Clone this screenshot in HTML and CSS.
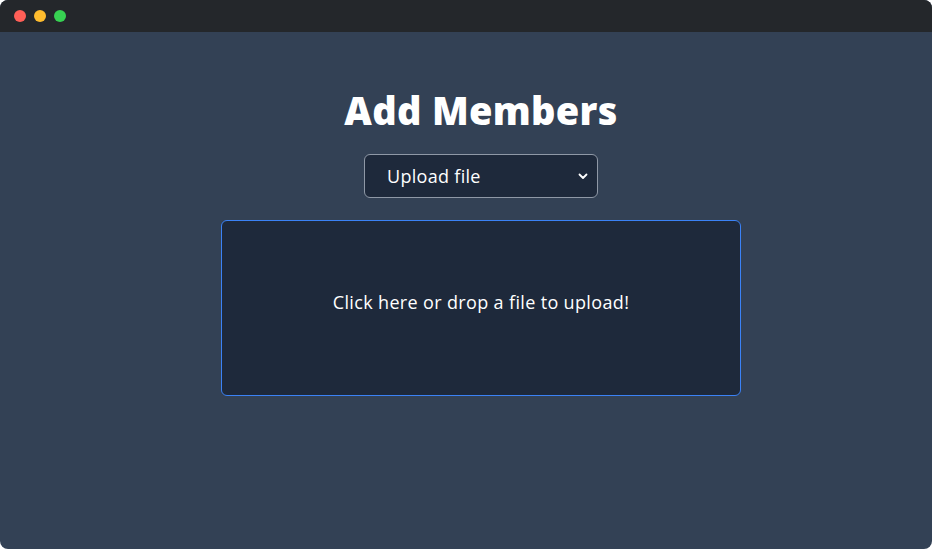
FILE: index.html
```html
<!DOCTYPE html>
<html>
<head>
<meta charset="utf-8">
<link rel="stylesheet" href="styles.css">
</head>
<body>
<div class="window">
  <div class="titlebar">
    <span class="dot red"></span>
    <span class="dot yellow"></span>
    <span class="dot green"></span>
  </div>
  <main class="content">
    <h1 class="title">Add Members</h1>
    <div class="select">
      <span class="select-label">Upload file</span>
      <svg class="chevron" width="10" height="7" viewBox="0 0 10 7"><path d="M1.5 1.5 L5 5 L8.5 1.5" fill="none" stroke="#ffffff" stroke-width="1.8" stroke-linecap="round" stroke-linejoin="round"/></svg>
    </div>
    <div class="dropzone">
      <span class="drop-text">Click here or drop a file to upload!</span>
    </div>
  </main>
</div>
</body>
</html>
```
FILE: styles.css
```css
html, body {
  margin: 0;
  padding: 0;
  background: #ffffff;
}
body {
  width: 932px;
  height: 549px;
  font-family: "Open Sans", "Liberation Sans", sans-serif;
}
.window {
  width: 932px;
  height: 549px;
  border-radius: 8px;
  overflow: hidden;
  background: #334155;
  display: flex;
  flex-direction: column;
}
.titlebar {
  height: 32px;
  background: #24272b;
  display: flex;
  align-items: center;
  gap: 8px;
  padding-left: 14px;
  flex-shrink: 0;
}
.dot {
  width: 12px;
  height: 12px;
  border-radius: 50%;
  display: block;
}
.red { background: #ff5f57; }
.yellow { background: #febc2e; }
.green { background: #37d152; }
.content {
  flex: 1;
  display: flex;
  flex-direction: column;
  align-items: center;
  padding-left: 30px;
  padding-top: 54px;
}
.title {
  margin: 0;
  color: #ffffff;
  font-size: 38px;
  font-weight: 800;
  line-height: 48px;
  letter-spacing: 0.3px;
}
.select {
  margin-top: 20px;
  width: 234px;
  height: 44px;
  box-sizing: border-box;
  border: 1px solid #8f98a6;
  border-radius: 6px;
  background: #1e293b;
  display: flex;
  align-items: center;
  justify-content: space-between;
  padding: 0 9px 0 22px;
}
.select-label {
  color: #ffffff;
  font-size: 18px;
  letter-spacing: 0.3px;
}
.chevron {
  display: block;
}
.dropzone {
  margin-top: 22px;
  width: 520px;
  height: 176px;
  box-sizing: border-box;
  border: 1px solid #3b82f6;
  border-radius: 6px;
  background: #1e293b;
  display: flex;
  align-items: center;
  justify-content: center;
  padding-bottom: 12px;
}
.drop-text {
  color: #ffffff;
  font-size: 18px;
  letter-spacing: 0.35px;
}
```
